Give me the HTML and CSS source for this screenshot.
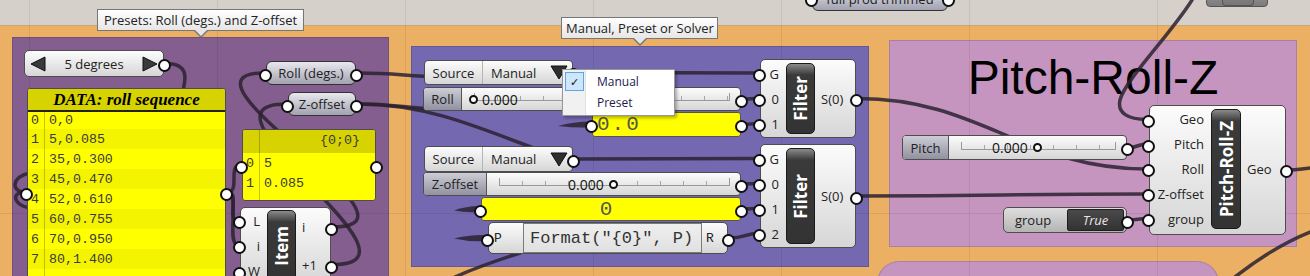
FILE: index.html
```html
<!DOCTYPE html>
<html>
<head>
<meta charset="utf-8">
<title>Pitch-Roll-Z</title>
<link rel="stylesheet" href="styles.css">
</head>
<body>
<div class="canvas">
  <div class="orange"></div>
  <div class="group g1"></div>
  <div class="group g2"></div>
  <div class="group g3"><div class="g-title">Pitch-Roll-Z</div></div>
  <div class="group g4"></div>

  <svg class="layer" width="1310" height="276" viewBox="0 0 1310 276">
    <g class="gridlines">
      <line x1="29.5" y1="0" x2="29.5" y2="276"/>
      <line x1="217.5" y1="0" x2="217.5" y2="276"/>
      <line x1="405.5" y1="0" x2="405.5" y2="276"/>
      <line x1="593.5" y1="0" x2="593.5" y2="276"/>
      <line x1="781.5" y1="0" x2="781.5" y2="276"/>
      <line x1="969.5" y1="0" x2="969.5" y2="276"/>
      <line x1="1157.5" y1="0" x2="1157.5" y2="276"/>
      <line x1="0" y1="213.5" x2="1310" y2="213.5"/>
    </g>
  </svg>

  <svg class="layer" width="1310" height="276" viewBox="0 0 1310 276">
    <g class="wires">
      <path d="M166,63.5 C190,63.5 186,80 182,94"/>
      <path d="M25,192 C10,192 12,176 30,173"/>
      <path d="M25,192 C10,192 14,206 30,208"/>
      <path d="M228,192 C240,192 228,165 240,165"/>
      <path d="M228,192 C240,192 226,220 238,220.5"/>
      <path d="M228,192 C240,192 226,245 238,245.5"/>
      <path d="M333,227 C440,227 160,73 264,73"/>
      <path d="M333,264.5 C440,264.5 180,104 286,104"/>
      <path d="M358,73 C395,73 405,76 440,77"/>
      <path d="M358,104 C395,104 405,108 440,109"/>
      <path d="M358,104 C430,104 480,128 570,162"/>
      <path d="M455,277 C475,268 495,261 520,253"/>
      <path d="M575,72.5 L758,73"/>
      <path d="M743,99 C750,99 751,98.5 758,98.5"/>
      <path d="M743,124.5 L758,123.5"/>
      <path d="M575,159 L758,158.5"/>
      <path d="M743,184 L758,183.5"/>
      <path d="M743,209 L758,208.5"/>
      <path d="M730,238 C745,238 745,233.5 758,233.5"/>
      <path d="M858,98.5 C980,98.5 1025,169 1147,169"/>
      <path d="M858,196 C1000,196 1005,194 1147,194"/>
      <path d="M1129,147.5 C1138,147.5 1138,144 1147,144"/>
      <path d="M1129,220 C1138,220 1138,218.6 1147,218.6"/>
      <path d="M1288,170 C1298,170 1300,169 1310,168"/>
      <path d="M1192,0 C1170,35 1125,80 1120,100 C1117,113 1128,119.4 1147,119.4"/>
      <path d="M1235,277 C1258,259 1285,242 1310,232"/>
    </g>
    <g class="stubs">
      <path d="M558,126 Q574,121.5 590,121.5 L590,127.5 Q574,128 558,126 Z"/>
      <path d="M454,210.5 Q466,206 479,206 L479,212 Q466,213 454,210.5 Z"/>
      <path d="M454,238.5 Q469,234.5 486,235 L486,241 Q469,242 454,238.5 Z"/>
    </g>
  </svg>

  <!-- top, partially visible nodes -->
  <div class="node param n-full grip-in grip-out">full prod trimmed</div>
  <div class="node n-tr"><div class="tr-in"></div></div>

  <!-- group 1 -->
  <div class="node vlist n-deg grip-out">
    <svg class="arrow" width="16" height="16" viewBox="0 0 16 16"><polygon points="15,1 1,8 15,15"/></svg>
    <span>5 degrees</span>
    <svg class="arrow" width="16" height="16" viewBox="0 0 16 16"><polygon points="1,1 15,8 1,15"/></svg>
  </div>

  <div class="node panel n-data grip-in grip-out">
    <div class="p-title">DATA: roll sequence</div>
    <div class="p-row first"><span class="p-idx">0</span><span>0,0</span></div>
    <div class="p-row"><span class="p-idx">1</span><span>5,0.085</span></div>
    <div class="p-row"><span class="p-idx">2</span><span>35,0.300</span></div>
    <div class="p-row"><span class="p-idx">3</span><span>45,0.470</span></div>
    <div class="p-row"><span class="p-idx">4</span><span>52,0.610</span></div>
    <div class="p-row"><span class="p-idx">5</span><span>60,0.755</span></div>
    <div class="p-row"><span class="p-idx">6</span><span>70,0.950</span></div>
    <div class="p-row"><span class="p-idx">7</span><span>80,1.400</span></div>
    <div class="p-row"><span class="p-idx"></span><span></span></div>
  </div>

  <div class="node param n-roll grip-in grip-out">Roll (degs.)</div>
  <div class="node param n-zoff grip-in grip-out">Z-offset</div>

  <div class="node panel n-path grip-in grip-out">
    <div class="p-head"><span class="p-idx"></span><span class="p-path">{0;0}</span></div>
    <div class="p-row"><span class="p-idx">0</span><span>5</span></div>
    <div class="p-row"><span class="p-idx">1</span><span>0.085</span></div>
    <div class="p-rest"><span class="p-idx"></span></div>
  </div>

  <div class="node comp n-item">
    <div class="ins"><div class="row-in">L</div><div class="row-in">i</div><div class="row-in">W</div></div>
    <div class="strip"><span>Item</span></div>
    <div class="outs"><div class="row-out">i</div><div class="row-out">+1</div></div>
  </div>

  <!-- group 2 -->
  <div class="node vlist2 n-src1 grip-out">
    <span class="vl-label">Source</span><span class="vl-val">Manual</span>
    <svg class="drop" width="18" height="15" viewBox="0 0 18 15"><polygon points="1,1 17,1 9,14"/></svg>
  </div>
  <div class="node slider n-rollsl grip-out">
    <div class="sl-label">Roll</div>
    <div class="sl-body"><i class="track"></i><span class="knob"></span><span class="sl-val">0.000</span></div>
  </div>
  <div class="node ypanel n-p00 grip-in grip-out"><span class="big00">0.0</span></div>
  <div class="node comp n-f1">
    <div class="ins"><div class="row-in">G</div><div class="row-in">0</div><div class="row-in">1</div></div>
    <div class="strip"><span>Filter</span></div>
    <div class="outs"><div class="row-out">S(0)</div></div>
  </div>

  <div class="node vlist2 n-src2 grip-out">
    <span class="vl-label">Source</span><span class="vl-val">Manual</span>
    <svg class="drop" width="18" height="15" viewBox="0 0 18 15"><polygon points="1,1 17,1 9,14"/></svg>
  </div>
  <div class="node slider n-zsl grip-out">
    <div class="sl-label">Z-offset</div>
    <div class="sl-body"><i class="track"></i><span class="sl-val">0.000</span><span class="knob"></span></div>
  </div>
  <div class="node ypanel n-p0 grip-in grip-out"><span class="big0">0</span></div>
  <div class="node fmt n-fmt grip-in grip-out">
    <span class="f-p">P</span><div class="f-code">Format("{0}", P)</div><span class="f-r">R</span>
  </div>
  <div class="node comp n-f2">
    <div class="ins"><div class="row-in">G</div><div class="row-in">0</div><div class="row-in">1</div><div class="row-in">2</div></div>
    <div class="strip"><span>Filter</span></div>
    <div class="outs"><div class="row-out">S(0)</div></div>
  </div>

  <!-- group 3 -->
  <div class="node slider n-psl grip-out">
    <div class="sl-label">Pitch</div>
    <div class="sl-body"><i class="track"></i><span class="sl-val">0.000</span><span class="knob"></span></div>
  </div>
  <div class="node toggle n-tog grip-out"><span class="tg-label">group</span><span class="tg-val">True</span></div>
  <div class="node comp n-prz">
    <div class="ins"><div class="row-in">Geo</div><div class="row-in">Pitch</div><div class="row-in">Roll</div><div class="row-in">Z-offset</div><div class="row-in">group</div></div>
    <div class="strip"><span>Pitch-Roll-Z</span></div>
    <div class="outs"><div class="row-out">Geo</div></div>
  </div>

  <!-- overlays -->
  <div class="tip t1">Presets: Roll (degs.) and Z-offset</div>
  <div class="tip t2">Manual, Preset or Solver</div>

  <div class="menu">
    <div class="mi checked"><span class="mi-ico">✓</span><span>Manual</span></div>
    <div class="mi"><span class="mi-ico"></span><span>Preset</span></div>
  </div>
</div>
</body>
</html>
```
FILE: styles.css
```css
* { box-sizing: border-box; }
html, body { margin: 0; padding: 0; }
body {
  width: 1310px; height: 276px; overflow: hidden;
  background: #d5d1ca;
  font-family: "Open Sans", "Noto Sans", sans-serif;
  font-size: 13px; color: #222;
}
.canvas { position: relative; width: 1310px; height: 276px; overflow: hidden; background: #d5d1ca; }

.orange { position: absolute; left: 0; right: 0; top: 25px; bottom: 0; background: #ebb064; border-top: 1px solid #c8a676; }
.group { position: absolute; border: 1px solid rgba(0,0,0,0.14); }
.g1 { left: 12px; top: 37px; width: 377px; height: 260px; background: #845e8e; }
.g2 { left: 411px; top: 46px; width: 458px; height: 221px; background: #7468b1; }
.g3 { left: 889px; top: 40px; width: 408px; height: 207px; background: #c595c0; text-align: center; padding-top: 13px; }
.g4 { left: 877px; top: 261px; width: 342px; height: 44px; background: #c595c0; border-radius: 22px; }
.g-title { font-family: "Liberation Sans", Arial, sans-serif; font-size: 48px; line-height: 48px; color: #000; }

.layer { position: absolute; left: 0; top: 0; }
.gridlines line { stroke: #000; stroke-opacity: 0.07; stroke-width: 1; }
.wires path { fill: none; stroke: #2c2230; stroke-opacity: 0.85; stroke-width: 3.5; stroke-linecap: round; }
.stubs path { fill: #2c2230; fill-opacity: 0.85; }

/* base node */
.node { position: absolute; border: 1px solid #4d4d4d; border-radius: 5px; background: linear-gradient(#fcfcfc, #d6d6d6); }
.grip-in::before, .grip-out::after, .row-in::before, .row-out::after {
  content: ""; position: absolute; top: 50%; width: 9px; height: 9px; margin-top: -4.5px;
  border: 2px solid #111; border-radius: 50%; background: #fff;
}
.grip-in::before, .row-in::before { left: -8px; }
.grip-out::after, .row-out::after { right: -8px; }

/* params */
.param { display: flex; align-items: center; justify-content: center; border-radius: 6px; border-color: #333; background: linear-gradient(#e8e8ee, #a2a2b0); white-space: nowrap; }
.n-roll { left: 266px; top: 61px; width: 90px; height: 24px; }
.n-zoff { left: 288px; top: 92px; width: 68px; height: 24px; }
.n-full { left: 812px; top: -14px; width: 136px; height: 25px; }
.n-tr { left: 1206px; top: -16px; width: 62px; height: 23px; border-radius: 4px; border-color: #555; background: linear-gradient(#a0a0a0, #7c7c7c); padding: 0 13px 0 15px; }
.tr-in { height: 100%; border: 1px solid #555; border-top: 0; border-radius: 0 0 4px 4px; background: linear-gradient(#8c8c8c, #777); }

/* value lists */
.vlist { display: flex; align-items: center; justify-content: space-between; padding: 0 5px; }
.n-deg { left: 24px; top: 50px; width: 140px; height: 27px; }
.arrow polygon { fill: #3a3a3a; stroke: #111; stroke-width: 1; }
.vlist2 { display: flex; align-items: center; border-radius: 4px; }
.n-src1 { left: 424px; top: 60px; width: 149px; height: 25px; }
.n-src2 { left: 424px; top: 146px; width: 149px; height: 26px; }
.vl-label { width: 58px; height: 100%; display: flex; align-items: center; justify-content: center; border-right: 1px solid #b4b4b4; }
.vl-val { flex: 1; padding-left: 8px; }
.drop { margin-right: 4px; }
.drop polygon { fill: #2e2e2e; stroke: #111; stroke-width: 1; }

/* sliders */
.slider { display: flex; border-radius: 4px; }
.sl-label { display: flex; align-items: center; justify-content: center; border-right: 1px solid #555; border-radius: 3px 0 0 3px; background: linear-gradient(#cdcdd6, #9191a0); }
.sl-body { flex: 1; position: relative; display: flex; align-items: center; gap: 5px; }
.track { position: absolute; left: 12px; right: 10px; top: 50%; height: 8px; margin-top: -6px; border: solid #9a9a9a; border-width: 0 1px 1px 1px;
  background: repeating-linear-gradient(90deg, transparent 0 22px, #a8a8a8 22px 23px) left bottom / 100% 4px no-repeat; }
.knob { position: relative; width: 9px; height: 9px; border: 2px solid #111; border-radius: 50%; background: #fff; }
.sl-val { position: relative; font-size: 14px; color: #111; }
.n-rollsl { left: 423px; top: 87px; width: 318px; height: 24px; }
.n-rollsl .sl-label { width: 38px; }
.n-rollsl .sl-body { padding-left: 7px; gap: 4px; }
.n-zsl { left: 423px; top: 172px; width: 318px; height: 24px; }
.n-zsl .sl-label { width: 63px; }
.n-zsl .sl-body { padding-left: 81px; gap: 5px; }
.n-psl { left: 902px; top: 135px; width: 225px; height: 25px; }
.n-psl .sl-label { width: 46px; }
.n-psl .sl-body { padding-left: 43px; gap: 5px; }

/* toggle */
.toggle { display: flex; align-items: center; padding: 0 2px 0 11px; background: linear-gradient(#dedede, #b4b4b4); }
.n-tog { left: 1003px; top: 207px; width: 124px; height: 26px; }
.tg-val { margin-left: auto; width: 57px; height: 22px; display: flex; align-items: center; justify-content: center; border: 1px solid #1e1e1e; border-radius: 2px; background: linear-gradient(#4a4a4a, #333); color: #e6e6e6; font-style: italic; }

/* panels */
.panel { border-radius: 3px; background: #ffff00; overflow: hidden; font-family: "Liberation Mono", "Courier New", monospace; font-size: 13.3px; color: #3a3a3a; }
.n-data { left: 27px; top: 88px; width: 199px; height: 208px; overflow: visible; }
.p-title { height: 23px; border-bottom: 2px solid #222; background: #d6d300; border-radius: 3px 3px 0 0; text-align: center; font-family: "Liberation Serif", "Times New Roman", serif; font-weight: 700; font-style: italic; font-size: 17px; line-height: 21px; color: #000; }
.p-row { display: flex; height: 20px; align-items: center; }
.n-data .p-row.first { height: 17px; }
.n-data .p-row:nth-child(even) { background: #ffff00; }
.n-data .p-row:nth-child(odd) { background: #f4f400; }
.p-idx { width: 17px; height: 100%; display: flex; align-items: center; padding-left: 3px; border-right: 1px solid rgba(0,0,0,0.22); margin-right: 4px; }
.n-path { left: 242px; top: 129px; width: 134px; height: 72px; overflow: visible; }
.p-head { display: flex; height: 23px; background: #d6d300; border-radius: 3px 3px 0 0; }
.p-head .p-idx { margin-right: 0; }
.p-path { flex: 1; text-align: right; padding-right: 15px; line-height: 22px; }
.p-rest { height: 7px; display: flex; }

.ypanel { border-radius: 3px; background: #ffff00; border-color: #555; display: flex; align-items: center; }
.n-p00 { left: 592px; top: 112px; width: 149px; height: 25px; }
.big00 { font-family: "Liberation Mono", monospace; font-size: 21px; letter-spacing: 2px; color: #555; padding-left: 4px; }
.n-p0 { left: 481px; top: 197px; width: 260px; height: 24px; justify-content: center; padding-right: 10px; }
.big0 { font-family: "Liberation Mono", monospace; font-size: 21px; color: #555; }

/* format */
.fmt { display: flex; align-items: stretch; font-family: "Liberation Mono", monospace; }
.n-fmt { left: 488px; top: 222px; width: 240px; height: 32px; }
.f-p { width: 34px; display: flex; align-items: center; padding-left: 5px; font-size: 13px; }
.f-code { width: 179px; margin: 0; display: flex; align-items: center; padding-left: 6px; border: 1px solid #7a7a7a; background: linear-gradient(#efefef, #e0e0e0); font-size: 17px; color: #333; white-space: nowrap; }
.f-r { flex: 1; display: flex; align-items: center; padding-left: 4px; font-size: 13px; }

/* components */
.comp { display: flex; padding: 1px 0; }
.ins, .outs { display: flex; flex-direction: column; }
.ins > div, .outs > div { flex: 1; display: flex; align-items: center; position: relative; white-space: nowrap; }
.ins > div { justify-content: flex-end; padding-right: 7px; }
.outs { flex: 1; }
.outs > div { padding-left: 6px; }
.strip { margin: 2px 0; width: 29px; border: 1px solid #1a1a1a; border-radius: 5px; background: linear-gradient(#8a8a8a, #3a3a3a 11px, #333); display: flex; align-items: center; justify-content: center; }
.strip span { writing-mode: vertical-rl; transform: rotate(180deg); color: #fff; font-weight: 700; font-size: 17px; white-space: nowrap; }

.n-f1 { left: 760px; top: 59px; width: 96px; height: 79px; }
.n-f2 { left: 760px; top: 144px; width: 96px; height: 104px; }
.n-f1 .ins, .n-f2 .ins { width: 25px; }
.n-item { left: 240px; top: 207px; width: 91px; height: 78px; padding: 0; }
.n-item .ins { width: 26px; }
.n-prz { left: 1149px; top: 105px; width: 137px; height: 130px; padding: 1px 0 3px; }
.n-prz .ins { width: 61px; }
.n-prz .strip { width: 30px; }

/* tooltips */
.tip { position: absolute; height: 22px; padding: 0 4px; border: 1px solid #767676; background: linear-gradient(#fff, #e6e6e6); line-height: 20px; text-align: center; white-space: nowrap; color: #222; }
.tip::before { content: ""; position: absolute; left: 50%; bottom: -8px; margin-left: -7px; border-style: solid; border-width: 7px 7px 0 7px; border-color: #767676 transparent transparent transparent; }
.tip::after { content: ""; position: absolute; left: 50%; bottom: -6px; margin-left: -6px; border-style: solid; border-width: 6px 6px 0 6px; border-color: #e6e6e6 transparent transparent transparent; }
.t1 { left: 97px; top: 9px; width: 207px; }
.t2 { left: 561px; top: 17px; width: 157px; }

/* context menu */
.menu { position: absolute; left: 562px; top: 69px; width: 113px; height: 47px; padding: 1px 0 0 2px; border: 1px solid #979797;
  background: linear-gradient(90deg, #f1f1f1 0 22px, #e2e2e2 22px 23px, #fff 23px); box-shadow: 2px 2px 3px rgba(0,0,0,0.3);
  font-size: 12px; color: #1b1b4b; }
.mi { display: flex; align-items: center; height: 21px; }
.mi-ico { width: 19px; height: 19px; display: flex; align-items: center; justify-content: center; margin-right: 13px; font-size: 11px; color: #111; }
.checked .mi-ico { background: #cde6fb; border: 1px solid #5fa5e5; }
```
